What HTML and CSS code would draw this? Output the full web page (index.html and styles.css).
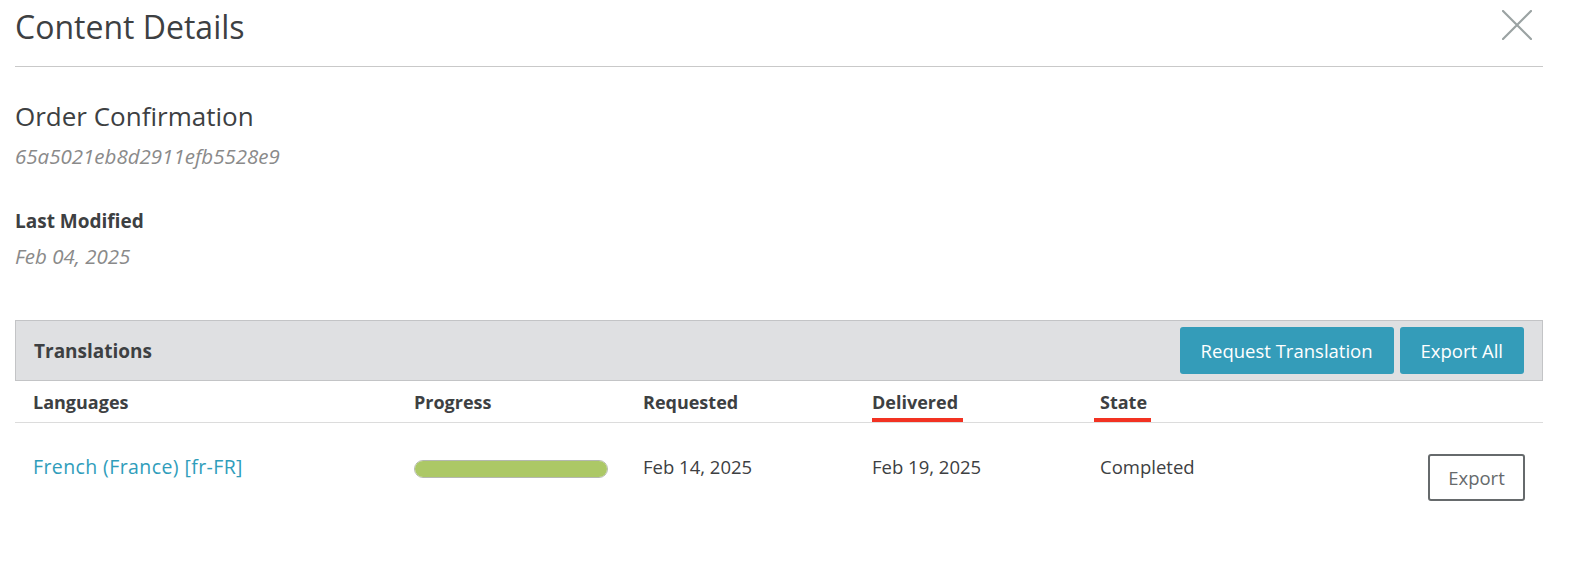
FILE: index.html
```html
<!DOCTYPE html>
<html>
<head>
<meta charset="utf-8">
<link rel="stylesheet" href="styles.css">
</head>
<body>
<div class="page">
  <div class="header">
    <h1 class="title">Content Details</h1>
    <svg class="close" width="30" height="30" viewBox="0 0 30 30"><path d="M1 1L29 29M29 1L1 29" stroke="#9ba3a3" stroke-width="2.2" stroke-linecap="round" fill="none"/></svg>
  </div>
  <div class="name">Order Confirmation</div>
  <div class="meta">65a5021eb8d2911efb5528e9</div>
  <div class="label">Last Modified</div>
  <div class="meta meta-date">Feb 04, 2025</div>

  <div class="panel">
    <div class="panel-bar">
      <div class="panel-title">Translations</div>
      <div class="actions">
        <button class="btn">Request Translation</button>
        <button class="btn">Export All</button>
      </div>
    </div>
    <div class="row head">
      <div class="cell">Languages</div>
      <div class="cell">Progress</div>
      <div class="cell">Requested</div>
      <div class="cell"><span class="mark mark-delivered">Delivered</span></div>
      <div class="cell"><span class="mark mark-state">State</span></div>
      <div class="cell"></div>
    </div>
    <div class="row data">
      <div class="cell"><a class="lang" href="#">French (France) [fr-FR]</a></div>
      <div class="cell"><div class="bar"><div class="bar-fill" style="width:100%"></div></div></div>
      <div class="cell">Feb 14, 2025</div>
      <div class="cell">Feb 19, 2025</div>
      <div class="cell">Completed</div>
      <div class="cell cell-end"><button class="btn-outline">Export</button></div>
    </div>
  </div>
</div>
</body>
</html>
```
FILE: styles.css
```css
* { box-sizing: border-box; }
html, body { margin: 0; padding: 0; background: #fff; }
body {
  font-family: "Open Sans", Lato, "Liberation Sans", sans-serif;
  color: #3d4042;
}
.page { padding: 0 30px 0 15px; }

.header {
  display: flex;
  justify-content: space-between;
  align-items: flex-start;
  height: 67px;
  border-bottom: 1px solid #c9c9c9;
}
.title {
  margin: 8px 0 0 0;
  font-size: 32px;
  line-height: 38px;
  font-weight: 400;
  color: #3d4042;
}
.close { margin: 10px 11px 0 0; }

.name {
  margin-top: 33px;
  font-size: 26px;
  line-height: 32px;
}
.meta {
  margin-top: 11px;
  font-size: 20.5px;
  line-height: 26px;
  font-style: italic;
  color: #8a8a8a;
}
.label {
  margin-top: 39px;
  font-size: 19px;
  line-height: 26px;
  font-weight: 700;
}
.meta-date { margin-top: 9px; }

.panel { margin-top: 51px; }
.panel-bar {
  display: flex;
  justify-content: space-between;
  align-items: center;
  height: 61px;
  padding: 0 18px;
  background: #dfe0e2;
  border: 1px solid #c3c4c6;
}
.panel-title { font-size: 19px; font-weight: 700; }
.actions { display: flex; gap: 6px; }
.btn {
  height: 47px;
  padding: 0 21px;
  border: none;
  border-radius: 3px;
  background: #349cb9;
  color: #fff;
  font-family: inherit;
  font-size: 18.5px;
}

.row {
  display: grid;
  grid-template-columns: 381px 229px 229px 228px 1fr auto;
  padding: 0 18px;
}
.head {
  height: 42px;
  align-items: center;
  border-bottom: 1px solid #dcdcdc;
  font-size: 18px;
  font-weight: 700;
}
.head .cell { line-height: 24px; }
.mark { position: relative; }
.mark::after {
  content: "";
  position: absolute;
  top: 28px;
  height: 4px;
  background: #f23222;
}
.mark-delivered::after { left: 0; right: -5px; }
.mark-state::after { left: -6px; right: -4px; }

.data {
  padding-top: 31px;
  align-items: start;
  font-size: 18.5px;
}
.data .cell { padding-top: 1px; line-height: 24px; }
.data .cell-end { padding-top: 0; }
.lang {
  color: #2f9dbb;
  text-decoration: none;
  font-size: 19.5px;
  letter-spacing: 0.4px;
}
.bar {
  margin-top: 5px;
  width: 194px;
  height: 18px;
  border: 1px solid #b4b8b0;
  border-radius: 9px;
  background: #eee;
  overflow: hidden;
}
.bar-fill { height: 100%; background: #acc866; }
.btn-outline {
  width: 97px;
  height: 47px;
  border: 2px solid #666a6c;
  border-radius: 3px;
  background: #fff;
  color: #666a6c;
  font-family: inherit;
  font-size: 18.5px;
}
```
